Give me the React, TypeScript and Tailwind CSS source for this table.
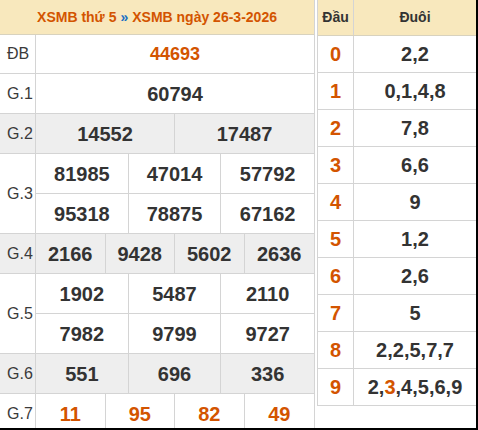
const prizes = [
  { label: "ĐB", rows: [["44693"]], grey: false, red: true, h: "h-[38px]" },
  { label: "G.1", rows: [["60794"]], grey: false },
  { label: "G.2", rows: [["14552", "17487"]], grey: true },
  { label: "G.3", rows: [["81985", "47014", "57792"], ["95318", "78875", "67162"]], grey: false },
  { label: "G.4", rows: [["2166", "9428", "5602", "2636"]], grey: true },
  { label: "G.5", rows: [["1902", "5487", "2110"], ["7982", "9799", "9727"]], grey: false },
  { label: "G.6", rows: [["551", "696", "336"]], grey: true },
  { label: "G.7", rows: [["11", "95", "82", "49"]], grey: false, red: true },
];

const loto = [
  { head: "0", tail: ["2", "2"] },
  { head: "1", tail: ["0", "1", "4", "8"] },
  { head: "2", tail: ["7", "8"] },
  { head: "3", tail: ["6", "6"] },
  { head: "4", tail: ["9"] },
  { head: "5", tail: ["1", "2"] },
  { head: "6", tail: ["2", "6"] },
  { head: "7", tail: ["5"] },
  { head: "8", tail: ["2", "2", "5", "7", "7"] },
  { head: "9", tail: ["2", "3", "4", "5", "6", "9"], hot: "3" },
];

const cols: Record<number, string> = {
  1: "grid-cols-1",
  2: "grid-cols-2",
  3: "grid-cols-3",
  4: "grid-cols-4",
};

export default function App() {
  return (
    <div className="w-[478px] h-[430px] overflow-hidden bg-white border-r-2 border-b-2 border-black font-['Liberation_Sans',Arial,sans-serif] text-[#333]">
      <div className="flex gap-[2px]">
        {/* Kết quả */}
        <div className="w-[315px] border-r border-[#d4d4d4] shrink-0">
          <div className="h-[35px] bg-[#f8e8bd] border-b border-[#d8d2be] flex items-center justify-center text-[14px] font-bold text-[#d35400]">
            XSMB thứ 5 <span className="text-[#1a6fc4] mx-[4px]">»</span> XSMB ngày 26-3-2026
          </div>
          {prizes.map((p) => (
            <div
              key={p.label}
              className={`flex border-b border-[#d4d4d4] ${p.grey ? "bg-[#eeeeee]" : "bg-white"}`}
            >
              <div className="w-[36px] shrink-0 border-r border-[#d4d4d4] flex items-center pl-[7px] text-[16px] text-[#3a3a3a]">
                {p.label}
              </div>
              <div className="flex-1 flex flex-col">
                {p.rows.map((row, i) => (
                  <div
                    key={i}
                    className={`grid ${cols[row.length]} ${
                      p.h ? p.h : i < p.rows.length - 1 ? "h-[40px] border-b border-[#d4d4d4]" : "h-[39px]"
                    }`}
                  >
                    {row.map((n, j) => (
                      <div
                        key={j}
                        className={`flex items-center justify-center font-bold ${
                          j < row.length - 1 ? "border-r border-[#d4d4d4]" : ""
                        } ${p.label === "ĐB" ? "text-[18px]" : "text-[20px]"} ${
                          p.red ? "text-[#d35400]" : "text-[#333]"
                        }`}
                      >
                        {n}
                      </div>
                    ))}
                  </div>
                ))}
              </div>
            </div>
          ))}
        </div>

        {/* Lô tô */}
        <div className="w-[159px] border-l border-[#d4d4d4] shrink-0 self-start">
          <div className="flex h-[36px] bg-[#f8e8bd] border-b border-[#d8d2be] text-[14px] font-bold text-[#333]">
            <div className="w-[36px] border-r border-[#d4d4d4] flex items-center justify-center">Đầu</div>
            <div className="flex-1 flex items-center justify-center">Đuôi</div>
          </div>
          {loto.map((r) => (
            <div key={r.head} className="flex h-[37px] border-b border-[#d4d4d4] text-[20px] font-bold">
              <div className="w-[36px] border-r border-[#d4d4d4] flex items-center justify-center text-[#d35400]">
                {r.head}
              </div>
              <div className="flex-1 flex items-center justify-center text-[#333]">
                {r.tail.map((t, i) => (
                  <span key={i}>
                    {i > 0 && ","}
                    <span className={r.hot === t ? "text-[#d35400]" : ""}>{t}</span>
                  </span>
                ))}
              </div>
            </div>
          ))}
        </div>
      </div>
    </div>
  );
}
